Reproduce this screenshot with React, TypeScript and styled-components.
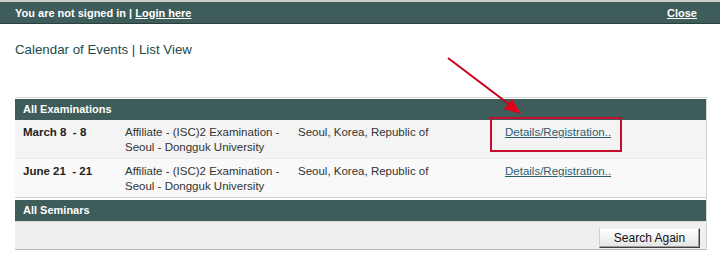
import React from "react";
import styled, { createGlobalStyle } from "styled-components";

const GlobalStyle = createGlobalStyle`
  html, body {
    margin: 0;
    padding: 0;
    background: #fff;
    font-family: "Liberation Sans", Arial, sans-serif;
  }
`;

type Exam = {
  date: string;
  title: string[];
  place: string;
};

const exams: Exam[] = [
  {
    date: "March 8  - 8",
    title: ["Affiliate - (ISC)2 Examination -", "Seoul - Dongguk University"],
    place: "Seoul, Korea, Republic of",
  },
  {
    date: "June 21  - 21",
    title: ["Affiliate - (ISC)2 Examination -", "Seoul - Dongguk University"],
    place: "Seoul, Korea, Republic of",
  },
];

export default function App() {
  return (
    <Page>
      <GlobalStyle />
      <TopBar>
        <span>
          You are not signed in | <BarLink href="#">Login here</BarLink>
        </span>
        <BarLink href="#">Close</BarLink>
      </TopBar>

      <Title>Calendar of Events | List View</Title>

      <Panel>
        <SectionHead>All Examinations</SectionHead>
        {exams.map((e, i) => (
          <Row key={i} $alt={i % 2 === 1}>
            <DateCell>{e.date}</DateCell>
            <EventCell>
              {e.title[0]}
              <br />
              {e.title[1]}
            </EventCell>
            <PlaceCell>{e.place}</PlaceCell>
            <LinkCell>
              <DetailLink href="#">Details/Registration..</DetailLink>
            </LinkCell>
          </Row>
        ))}
        <SectionHead $gap>All Seminars</SectionHead>
        <Footer>
          <SearchButton type="button">Search Again</SearchButton>
        </Footer>
      </Panel>

      {/* red annotation drawn over the page */}
      <Annotation width="720" height="275" viewBox="0 0 720 275">
        <line x1="448" y1="58" x2="510" y2="105" stroke="#c8001c" strokeWidth="2" />
        <polygon points="521,114 504,109 512,99" fill="#e0001c" />
        <rect x="491" y="118" width="130" height="33" fill="none" stroke="#c4102c" strokeWidth="2" />
      </Annotation>
    </Page>
  );
}

const Page = styled.div`
  position: relative;
  width: 720px;
  height: 275px;
  overflow: hidden;
  border-top: 2px solid #cfcfcf;
  box-sizing: border-box;
`;

const TopBar = styled.div`
  display: flex;
  justify-content: space-between;
  align-items: center;
  height: 21px;
  padding: 0 23px 0 15px;
  background: #3e5c59;
  border-bottom: 1px solid #2a3f3d;
  color: #fff;
  font-size: 11px;
  font-weight: bold;
`;

const BarLink = styled.a`
  color: #fff;
  text-decoration: underline;
`;

const Title = styled.div`
  padding: 18px 0 0 15px;
  height: 54px;
  box-sizing: border-box;
  font-size: 13.3px;
  color: #24484a;
  line-height: 15px;
`;

const Panel = styled.div`
  margin: 19px 0 0 15px;
  width: 692px;
  border-top: 1px solid #d6d6d6;
  border-right: 1px solid #d6d6d6;
  border-bottom: 1px solid #b8b8b8;
  padding-top: 1px;
  box-sizing: border-box;
`;

const SectionHead = styled.div<{ $gap?: boolean }>`
  height: 21px;
  line-height: 21px;
  padding-left: 8px;
  margin-top: ${(p) => (p.$gap ? "2px" : "0")};
  background: #3e5c59;
  color: #fff;
  font-size: 11px;
  font-weight: bold;
`;

const Row = styled.div<{ $alt: boolean }>`
  display: grid;
  grid-template-columns: 102px 173px 207px 1fr;
  padding: 5px 0 3px 8px;
  background: ${(p) => (p.$alt ? "#f9f9f9" : "#f4f4f4")};
  border-bottom: 1px solid ${(p) => (p.$alt ? "#cfcfcf" : "#ececec")};
  font-size: 11.5px;
  line-height: 15px;
  color: #333;
`;

const DateCell = styled.div`
  font-weight: bold;
  color: #222;
  white-space: pre;
`;

const EventCell = styled.div``;

const PlaceCell = styled.div``;

const LinkCell = styled.div``;

const DetailLink = styled.a`
  color: #2d5d70;
  text-decoration: underline;
`;

const Footer = styled.div`
  display: flex;
  justify-content: flex-end;
  align-items: flex-start;
  height: 28px;
  padding: 6px 6px 0 0;
  box-sizing: border-box;
  background: #efefef;
  border-top: 1px solid #dcdcdc;
`;

const SearchButton = styled.button`
  width: 101px;
  height: 20px;
  padding: 0;
  font-family: "Liberation Sans", Arial, sans-serif;
  font-size: 12px;
  color: #111;
  background: linear-gradient(#ffffff, #e4e4e4);
  border: 1px solid;
  border-color: #f4f4f4 #404040 #404040 #d0d0d0;
  box-shadow: inset -1px -1px 0 #a0a0a0;
  border-radius: 0;
`;

const Annotation = styled.svg`
  position: absolute;
  left: 0;
  top: -2px;
  pointer-events: none;
`;
